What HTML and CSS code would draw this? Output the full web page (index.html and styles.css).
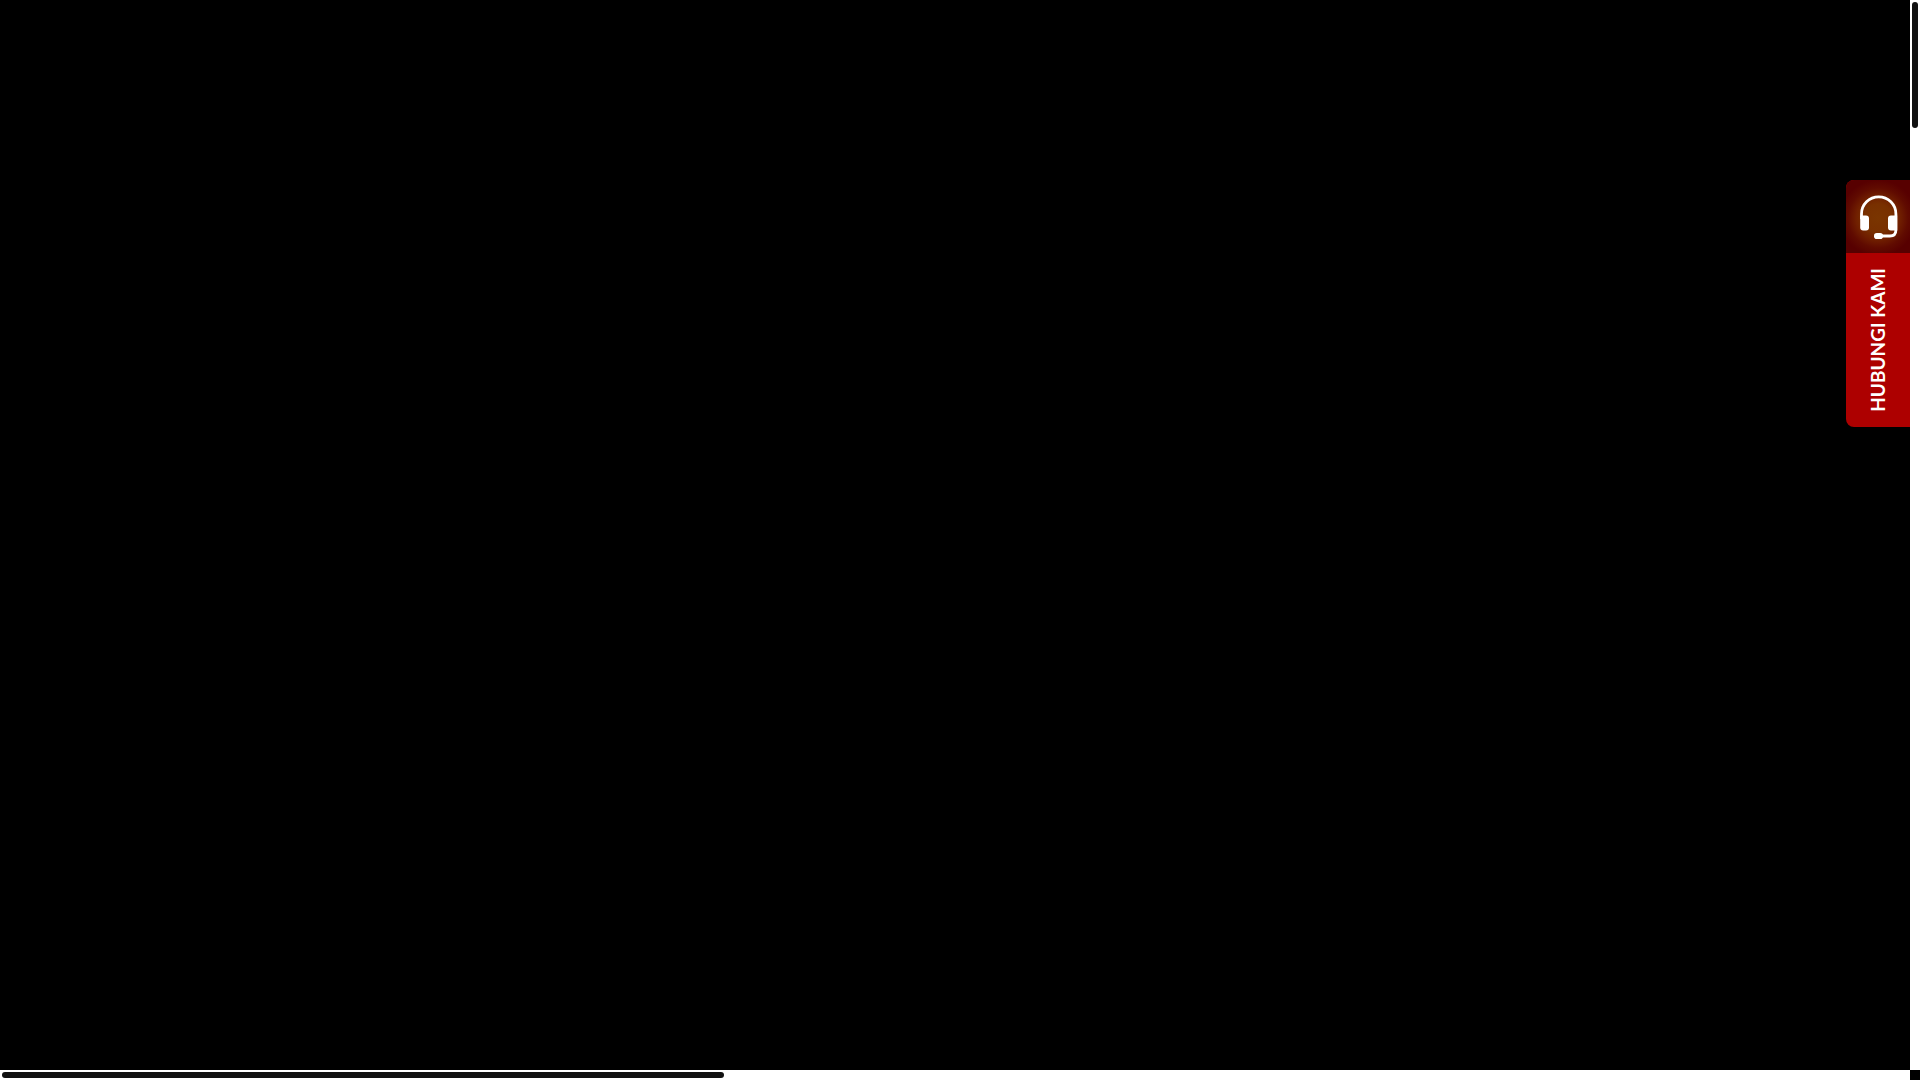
FILE: index.html
```html
<!DOCTYPE html>
<html lang="id">
<head>
<meta charset="utf-8">
<meta name="viewport" content="width=device-width, initial-scale=1">
<title>Hubungi Kami</title>
<link rel="stylesheet" href="styles.css">
</head>
<body>
<div class="frame">
  <main class="viewport">
    <a class="contact" href="#kontak">
      <span class="contact-icon">
        <svg width="38" height="44" viewBox="0 0 38 44" fill="none" aria-hidden="true">
          <path d="M1.500 24V19a17.200 17.200 0 0 1 34.400 0V35q0 6-6 6H20" stroke="#fff" stroke-width="2.800"/>
          <path d="M0.200 20.500H6Q9 20.500 9 23.500V32.500Q9 35.500 6 35.500H3.200Q0.200 35.500 0.200 32.500Z" fill="#fff"/>
          <path d="M37.200 20.500H31Q28 20.500 28 23.500V32.500Q28 35.500 31 35.500H37.200Z" fill="#fff"/>
          <rect x="14" y="38" width="9" height="6" rx="2.800" fill="#fff"/>
        </svg>
      </span>
      <span class="contact-label">HUBUNGI KAMI</span>
    </a>
  </main>
  <div class="track track-y"><div class="thumb"></div></div>
  <div class="track track-x"><div class="thumb"></div></div>
  <div class="corner"></div>
</div>
</body>
</html>
```
FILE: styles.css
```css
* {
  box-sizing: border-box;
}

body {
  margin: 0;
  background: #000;
  font-family: Lato, "Liberation Sans", sans-serif;
}

.frame {
  display: grid;
  grid-template-columns: 1fr 10px;
  grid-template-rows: 1fr 10px;
  height: 100vh;
}

.viewport {
  display: flex;
  justify-content: flex-end;
  align-items: flex-start;
  padding-top: 180px;
  background: #000;
}

.contact {
  display: flex;
  flex-direction: column;
  width: 64px;
  overflow: hidden;
  border-radius: 8px 0 0 8px;
  background: #ad0000;
  color: #fff;
  text-decoration: none;
}

.contact-icon {
  display: flex;
  justify-content: center;
  padding: 15px 0 14px 2px;
  background: radial-gradient(circle at 50% 52%, #7a3500 0, #783000 14px, #701f00 22px, #600b00 30px, #570000 38px);
}

.contact-icon svg {
  display: block;
}

.contact-label {
  writing-mode: vertical-rl;
  transform: rotate(180deg);
  padding: 15px 0;
  font-size: 19px;
  font-weight: 700;
  line-height: 64px;
  white-space: nowrap;
}

.track {
  padding: 2px;
  background: #fff;
}

.thumb {
  border-radius: 3px;
  background: #111;
}

.track-y .thumb {
  width: 6px;
  height: 11.8%;
}

.track-x .thumb {
  width: 37.9%;
  height: 6px;
}

.corner {
  background: #000;
}
```
